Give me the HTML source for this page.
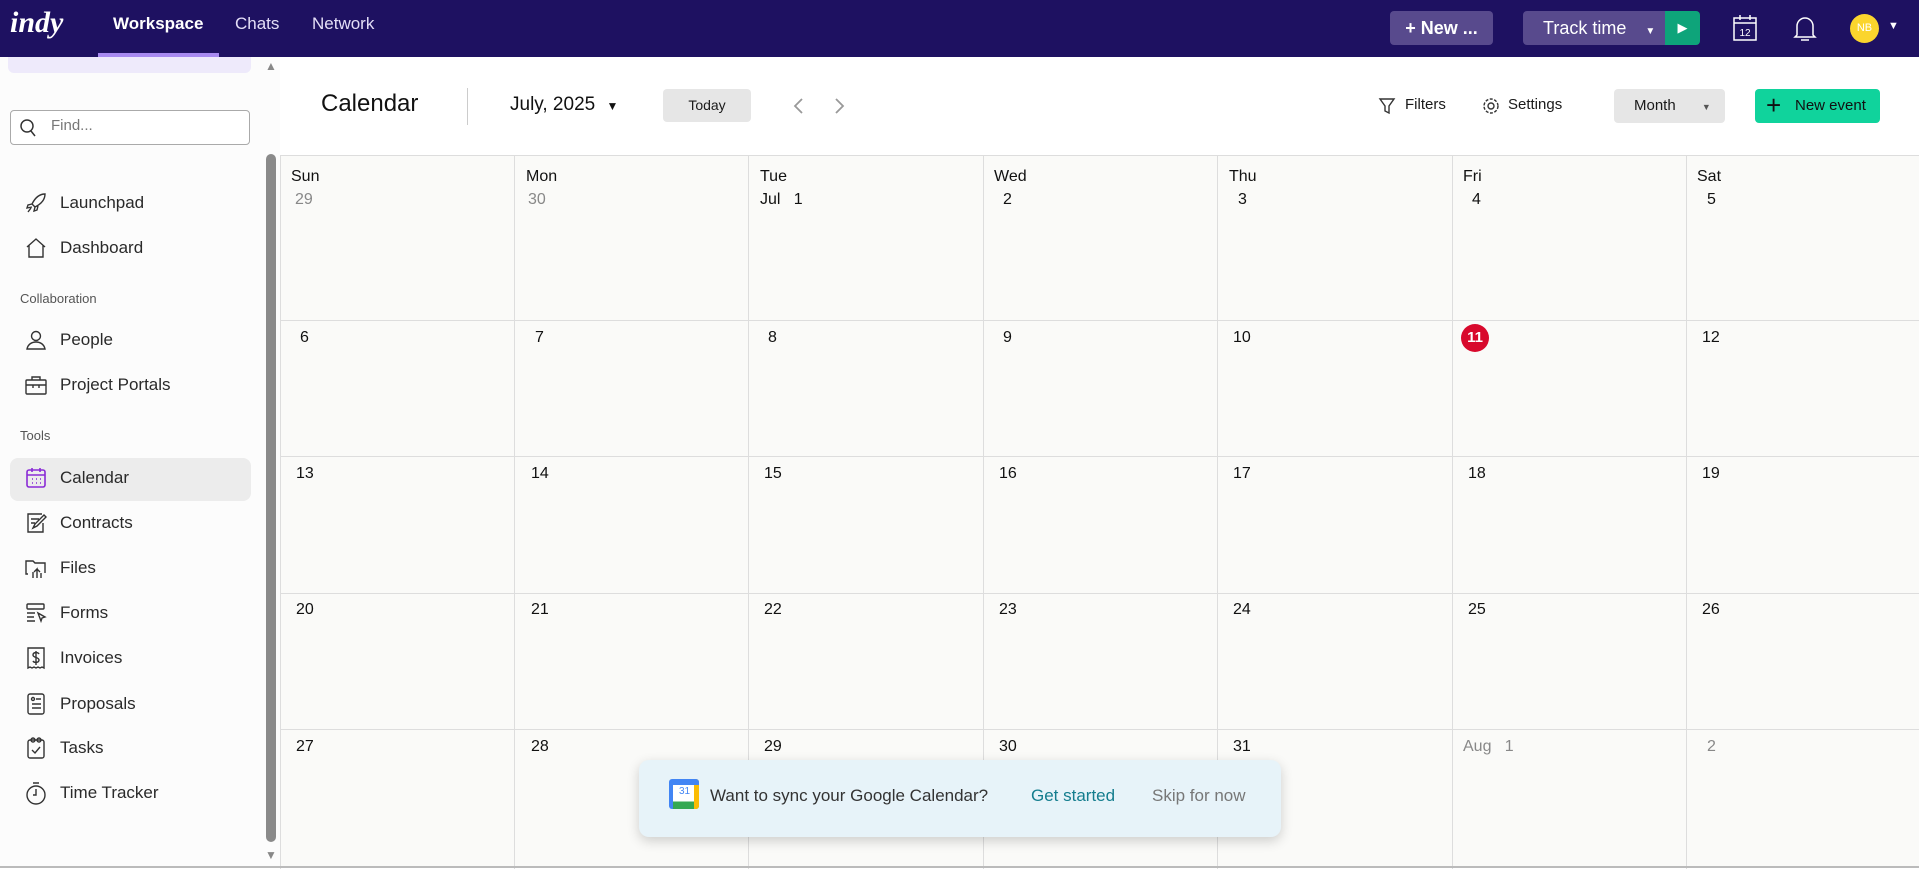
<!DOCTYPE html>
<html><head><meta charset="utf-8"><style>
*{box-sizing:border-box;margin:0;padding:0}
body{width:1919px;height:868px;overflow:hidden;font-family:"Liberation Sans",sans-serif;background:#fff;position:relative;color:#1a1a1a}
.abs{position:absolute}
.top{left:0;top:0;width:1919px;height:57px;background:#1e1161}
.nav{color:#e4def7;font-size:17px;top:14px}
.side{left:0;top:57px;width:280px;height:811px;background:#fcfcfc}
.item{position:absolute;left:60px;font-size:17px;color:#2a2a2a}
.ico{position:absolute;left:24px;width:24px;height:24px}
.sec{position:absolute;left:20px;font-size:13px;color:#555}
.grid{left:280px;top:155px;width:1639px;height:713px;background:#fafaf8;border-top:1px solid #ddd}
.vl{position:absolute;top:0;width:1px;height:713px;background:#ddd}
.hl{position:absolute;left:0;width:1639px;height:1px;background:#ddd}
.d{position:absolute;font-size:16px;color:#111}
.g{color:#888}
</style></head><body>
<div class="abs top"></div>
<div class="abs" style="left:10px;top:6px;font:italic bold 30px 'Liberation Serif',serif;color:#fff">indy</div>
<div class="abs nav" style="left:113px;color:#fff;font-weight:bold">Workspace</div>
<div class="abs" style="left:98px;top:53px;width:121px;height:4px;background:#a88af0"></div>
<div class="abs nav" style="left:235px">Chats</div>
<div class="abs nav" style="left:312px">Network</div>
<div class="abs" style="left:1390px;top:11px;width:103px;height:34px;background:#584a8d;border-radius:4px;color:#fff;font-size:18px;font-weight:bold;line-height:34px;text-align:center">+ New ...</div>
<div class="abs" style="left:1523px;top:11px;width:142px;height:34px;background:#584a8d;border-radius:4px 0 0 4px;color:#fff;font-size:18px;line-height:34px;padding-left:20px">Track time <span style="font-size:10px;margin-left:14px">▼</span></div>
<div class="abs" style="left:1665px;top:11px;width:35px;height:34px;background:#0ea47a;border-radius:0 4px 4px 0;color:#fff;font-size:13px;line-height:34px;text-align:center">▶</div>
<svg class="abs" style="left:1732px;top:14px" width="26" height="28" viewBox="0 0 26 28" fill="none" stroke="#fff" stroke-width="1.5"><rect x="2" y="4" width="22" height="22"/><line x1="2" y1="9" x2="24" y2="9"/><line x1="8" y1="1" x2="8" y2="6"/><line x1="18" y1="1" x2="18" y2="6"/><text x="13" y="22" font-size="10" fill="#fff" stroke="none" text-anchor="middle" font-family="Liberation Sans">12</text></svg>
<svg class="abs" style="left:1793px;top:14px" width="24" height="28" viewBox="0 0 24 28" fill="none" stroke="#fff" stroke-width="1.5"><path d="M4 21V12a8 8 0 0 1 16 0v9l2 2H2z"/><line x1="8" y1="26" x2="16" y2="26"/></svg>
<div class="abs" style="left:1850px;top:14px;width:29px;height:29px;border-radius:50%;background:#fbd52d;color:#fff;font-size:11px;line-height:29px;text-align:center">NB</div>
<div class="abs" style="left:1888px;top:20px;color:#fff;font-size:11px">▼</div>

<div class="abs side"></div>
<div class="abs" style="left:8px;top:57px;width:243px;height:16px;background:#eeeafb;border-radius:0 0 6px 6px"></div>
<div class="abs" style="left:10px;top:110px;width:240px;height:35px;border:1px solid #aaa;border-radius:4px;background:#fff"></div>
<svg class="abs" style="left:19px;top:118px" width="18" height="20" fill="none" stroke="#333" stroke-width="1.5"><circle cx="8" cy="8" r="6"/><line x1="12" y1="13" x2="16" y2="18"/></svg>
<div class="abs" style="left:51px;top:117px;font-size:15px;color:#777">Find...</div>
<div class="abs" style="left:265px;top:59px;color:#888;font-size:12px">▲</div>
<div class="abs" style="left:266px;top:154px;width:10px;height:688px;background:#8a8a8a;border-radius:5px"></div>
<div class="abs" style="left:265px;top:848px;color:#888;font-size:12px">▼</div>
<div class="abs" style="left:10px;top:458px;width:241px;height:43px;background:#ececec;border-radius:8px"></div>

<svg class="ico" style="top:191px" viewBox="0 0 24 24" fill="none" stroke="#333" stroke-width="1.4"><path d="M21 3c-6 0-10 4-13 10l3 3c6-3 10-7 10-13zM8 13l-4 1-1 3 5-1M11 16l-1 4 3-1 1-4M7 17l-3 4"/></svg>
<div class="item" style="top:193px">Launchpad</div>
<svg class="ico" style="top:236px" viewBox="0 0 24 24" fill="none" stroke="#333" stroke-width="1.4"><path d="M3 11l9-8 9 8M5 9v12h14V9"/></svg>
<div class="item" style="top:238px">Dashboard</div>
<div class="sec" style="top:291px">Collaboration</div>
<svg class="ico" style="top:328px" viewBox="0 0 24 24" fill="none" stroke="#333" stroke-width="1.4"><circle cx="12" cy="8" r="4.5"/><path d="M3 21c1-5 5-7 9-7s8 2 9 7z"/></svg>
<div class="item" style="top:330px">People</div>
<svg class="ico" style="top:373px" viewBox="0 0 24 24" fill="none" stroke="#333" stroke-width="1.4"><rect x="2" y="7" width="20" height="14" rx="1"/><path d="M8 7V4h8v3M2 12h20M9 12v3M15 12v3"/></svg>
<div class="item" style="top:375px">Project Portals</div>
<div class="sec" style="top:428px">Tools</div>
<svg class="ico" style="top:466px" viewBox="0 0 24 24" fill="none" stroke="#8a2bd6" stroke-width="1.6"><rect x="3" y="4" width="18" height="17" rx="2"/><path d="M3 9h18M8 2v4M16 2v4M8 13h1M12 13h1M16 13h1M8 17h1M12 17h1M16 17h1"/></svg>
<div class="item" style="top:468px">Calendar</div>
<svg class="ico" style="top:511px" viewBox="0 0 24 24" fill="none" stroke="#333" stroke-width="1.4"><path d="M19 12v9H4V3h14M7 8h8M7 12h4M9 17l2-4 9-9 2 2-9 9z"/></svg>
<div class="item" style="top:513px">Contracts</div>
<svg class="ico" style="top:556px" viewBox="0 0 24 24" fill="none" stroke="#333" stroke-width="1.4"><path d="M4 18H2V5h7l2 2h10v10M9 22v-6M13 22v-9l-3 3M13 13l3 3M17 22v-5"/></svg>
<div class="item" style="top:558px">Files</div>
<svg class="ico" style="top:601px" viewBox="0 0 24 24" fill="none" stroke="#333" stroke-width="1.4"><rect x="3" y="3" width="17" height="5" rx="1"/><path d="M3 12h8M3 16h7M3 20h8M14 12l7 4-3 1-1 3z"/></svg>
<div class="item" style="top:603px">Forms</div>
<svg class="ico" style="top:646px" viewBox="0 0 24 24" fill="none" stroke="#333" stroke-width="1.4"><path d="M4 2h16v20l-2-1-2 1-2-1-2 1-2-1-2 1-2-1-2 1zM15 8c-1-2-6-2-6 1s6 2 6 5-5 3-6 1M12 5v14"/></svg>
<div class="item" style="top:648px">Invoices</div>
<svg class="ico" style="top:692px" viewBox="0 0 24 24" fill="none" stroke="#333" stroke-width="1.4"><rect x="4" y="2" width="16" height="20" rx="2"/><circle cx="9" cy="7" r="1.5"/><path d="M12 7h5M8 12h9M8 16h9"/></svg>
<div class="item" style="top:694px">Proposals</div>
<svg class="ico" style="top:736px" viewBox="0 0 24 24" fill="none" stroke="#333" stroke-width="1.4"><rect x="4" y="4" width="16" height="18" rx="2"/><circle cx="9" cy="4" r="2"/><circle cx="15" cy="4" r="2"/><path d="M8 14l3 3 5-6"/></svg>
<div class="item" style="top:738px">Tasks</div>
<svg class="ico" style="top:781px" viewBox="0 0 24 24" fill="none" stroke="#333" stroke-width="1.4"><circle cx="12" cy="14" r="9"/><path d="M9 2h6M12 8v6h-3"/></svg>
<div class="item" style="top:783px">Time Tracker</div>

<div class="abs" style="left:321px;top:90px;font-size:24px;color:#111">Calendar</div>
<div class="abs" style="left:467px;top:88px;width:1px;height:37px;background:#ccc"></div>
<div class="abs" style="left:510px;top:94px;font-size:19px;color:#111">July, 2025 <span style="font-size:12px;margin-left:6px">▼</span></div>
<div class="abs" style="left:663px;top:89px;width:88px;height:33px;background:#e6e6e6;border-radius:4px;font-size:14px;line-height:33px;text-align:center">Today</div>
<svg class="abs" style="left:790px;top:96px" width="60" height="20" fill="none" stroke="#999" stroke-width="1.8"><path d="M12 3l-7 7 7 7M46 3l7 7-7 7"/></svg>
<svg class="abs" style="left:1378px;top:97px" width="18" height="18" fill="none" stroke="#333" stroke-width="1.4"><path d="M2 2h14l-5 7v7l-4-2V9z"/></svg>
<div class="abs" style="left:1405px;top:96px;font-size:15px">Filters</div>
<svg class="abs" style="left:1482px;top:97px" width="18" height="18" fill="none" stroke="#333" stroke-width="1.4"><circle cx="9" cy="9" r="3"/><circle cx="9" cy="9" r="7" stroke-dasharray="3 1.5"/></svg>
<div class="abs" style="left:1508px;top:96px;font-size:15px">Settings</div>
<div class="abs" style="left:1614px;top:89px;width:111px;height:34px;background:#e6e6e6;border-radius:4px;font-size:15px;line-height:34px;padding-left:20px">Month <span style="font-size:9px;margin-left:22px;color:#555">▼</span></div>
<div class="abs" style="left:1755px;top:89px;width:125px;height:34px;background:#10d39c;border-radius:4px;font-size:15px;line-height:34px;padding-left:40px;color:#111">New event</div>
<div class="abs" style="left:1766px;top:88px;font-size:26px;line-height:34px;color:#111">+</div>

<div class="abs grid">
<div class="vl" style="left:0"></div><div class="vl" style="left:234px"></div><div class="vl" style="left:468px"></div><div class="vl" style="left:703px"></div><div class="vl" style="left:937px"></div><div class="vl" style="left:1172px"></div><div class="vl" style="left:1406px"></div>
<div class="hl" style="top:164px"></div><div class="hl" style="top:300px"></div><div class="hl" style="top:437px"></div><div class="hl" style="top:573px"></div>
</div>
<div class="abs" style="left:0;top:866px;width:1919px;height:2px;background:#bbb"></div>

<!-- header row -->
<div class="d" style="left:291px;top:168px">Sun</div><div class="d g" style="left:295px;top:191px">29</div>
<div class="d" style="left:526px;top:168px">Mon</div><div class="d g" style="left:528px;top:191px">30</div>
<div class="d" style="left:760px;top:168px">Tue</div><div class="d" style="left:760px;top:191px">Jul &nbsp;&nbsp;1</div>
<div class="d" style="left:994px;top:168px">Wed</div><div class="d" style="left:1003px;top:191px">2</div>
<div class="d" style="left:1229px;top:168px">Thu</div><div class="d" style="left:1238px;top:191px">3</div>
<div class="d" style="left:1463px;top:168px">Fri</div><div class="d" style="left:1472px;top:191px">4</div>
<div class="d" style="left:1697px;top:168px">Sat</div><div class="d" style="left:1707px;top:191px">5</div>
<!-- row 2 -->
<div class="d" style="left:300px;top:329px">6</div><div class="d" style="left:535px;top:329px">7</div><div class="d" style="left:768px;top:329px">8</div><div class="d" style="left:1003px;top:329px">9</div><div class="d" style="left:1233px;top:329px">10</div>
<div class="abs" style="left:1461px;top:324px;width:28px;height:28px;border-radius:50%;background:#d8092c;color:#fff;font-size:15px;font-weight:bold;line-height:28px;text-align:center">11</div>
<div class="d" style="left:1702px;top:329px">12</div>
<div class="d" style="left:296px;top:465px">13</div><div class="d" style="left:531px;top:465px">14</div><div class="d" style="left:764px;top:465px">15</div><div class="d" style="left:999px;top:465px">16</div><div class="d" style="left:1233px;top:465px">17</div><div class="d" style="left:1468px;top:465px">18</div><div class="d" style="left:1702px;top:465px">19</div>
<div class="d" style="left:296px;top:601px">20</div><div class="d" style="left:531px;top:601px">21</div><div class="d" style="left:764px;top:601px">22</div><div class="d" style="left:999px;top:601px">23</div><div class="d" style="left:1233px;top:601px">24</div><div class="d" style="left:1468px;top:601px">25</div><div class="d" style="left:1702px;top:601px">26</div>
<div class="d" style="left:296px;top:738px">27</div><div class="d" style="left:531px;top:738px">28</div><div class="d" style="left:764px;top:738px">29</div><div class="d" style="left:999px;top:738px">30</div><div class="d" style="left:1233px;top:738px">31</div><div class="d g" style="left:1463px;top:738px">Aug &nbsp;&nbsp;1</div><div class="d g" style="left:1707px;top:738px">2</div>

<div class="abs" style="left:639px;top:760px;width:642px;height:77px;background:#e7f3f9;border-radius:10px;box-shadow:0 4px 12px rgba(0,0,0,.18)"></div>
<div class="abs" style="left:669px;top:779px;width:30px;height:30px;border-radius:3px;background:linear-gradient(#4285f4 0 20%,transparent 20%),linear-gradient(90deg,transparent 80%,#fbbc04 80%),linear-gradient(transparent 75%,#34a853 75%);background-color:#fff;border-left:4px solid #4285f4"></div>
<div class="abs" style="left:679px;top:786px;font-size:10px;color:#4285f4">31</div>
<div class="abs" style="left:710px;top:786px;font-size:17px;color:#333">Want to sync your Google Calendar?</div>
<div class="abs" style="left:1031px;top:786px;font-size:17px;color:#147d8e">Get started</div>
<div class="abs" style="left:1152px;top:786px;font-size:17px;color:#777">Skip for now</div>
</body></html>
